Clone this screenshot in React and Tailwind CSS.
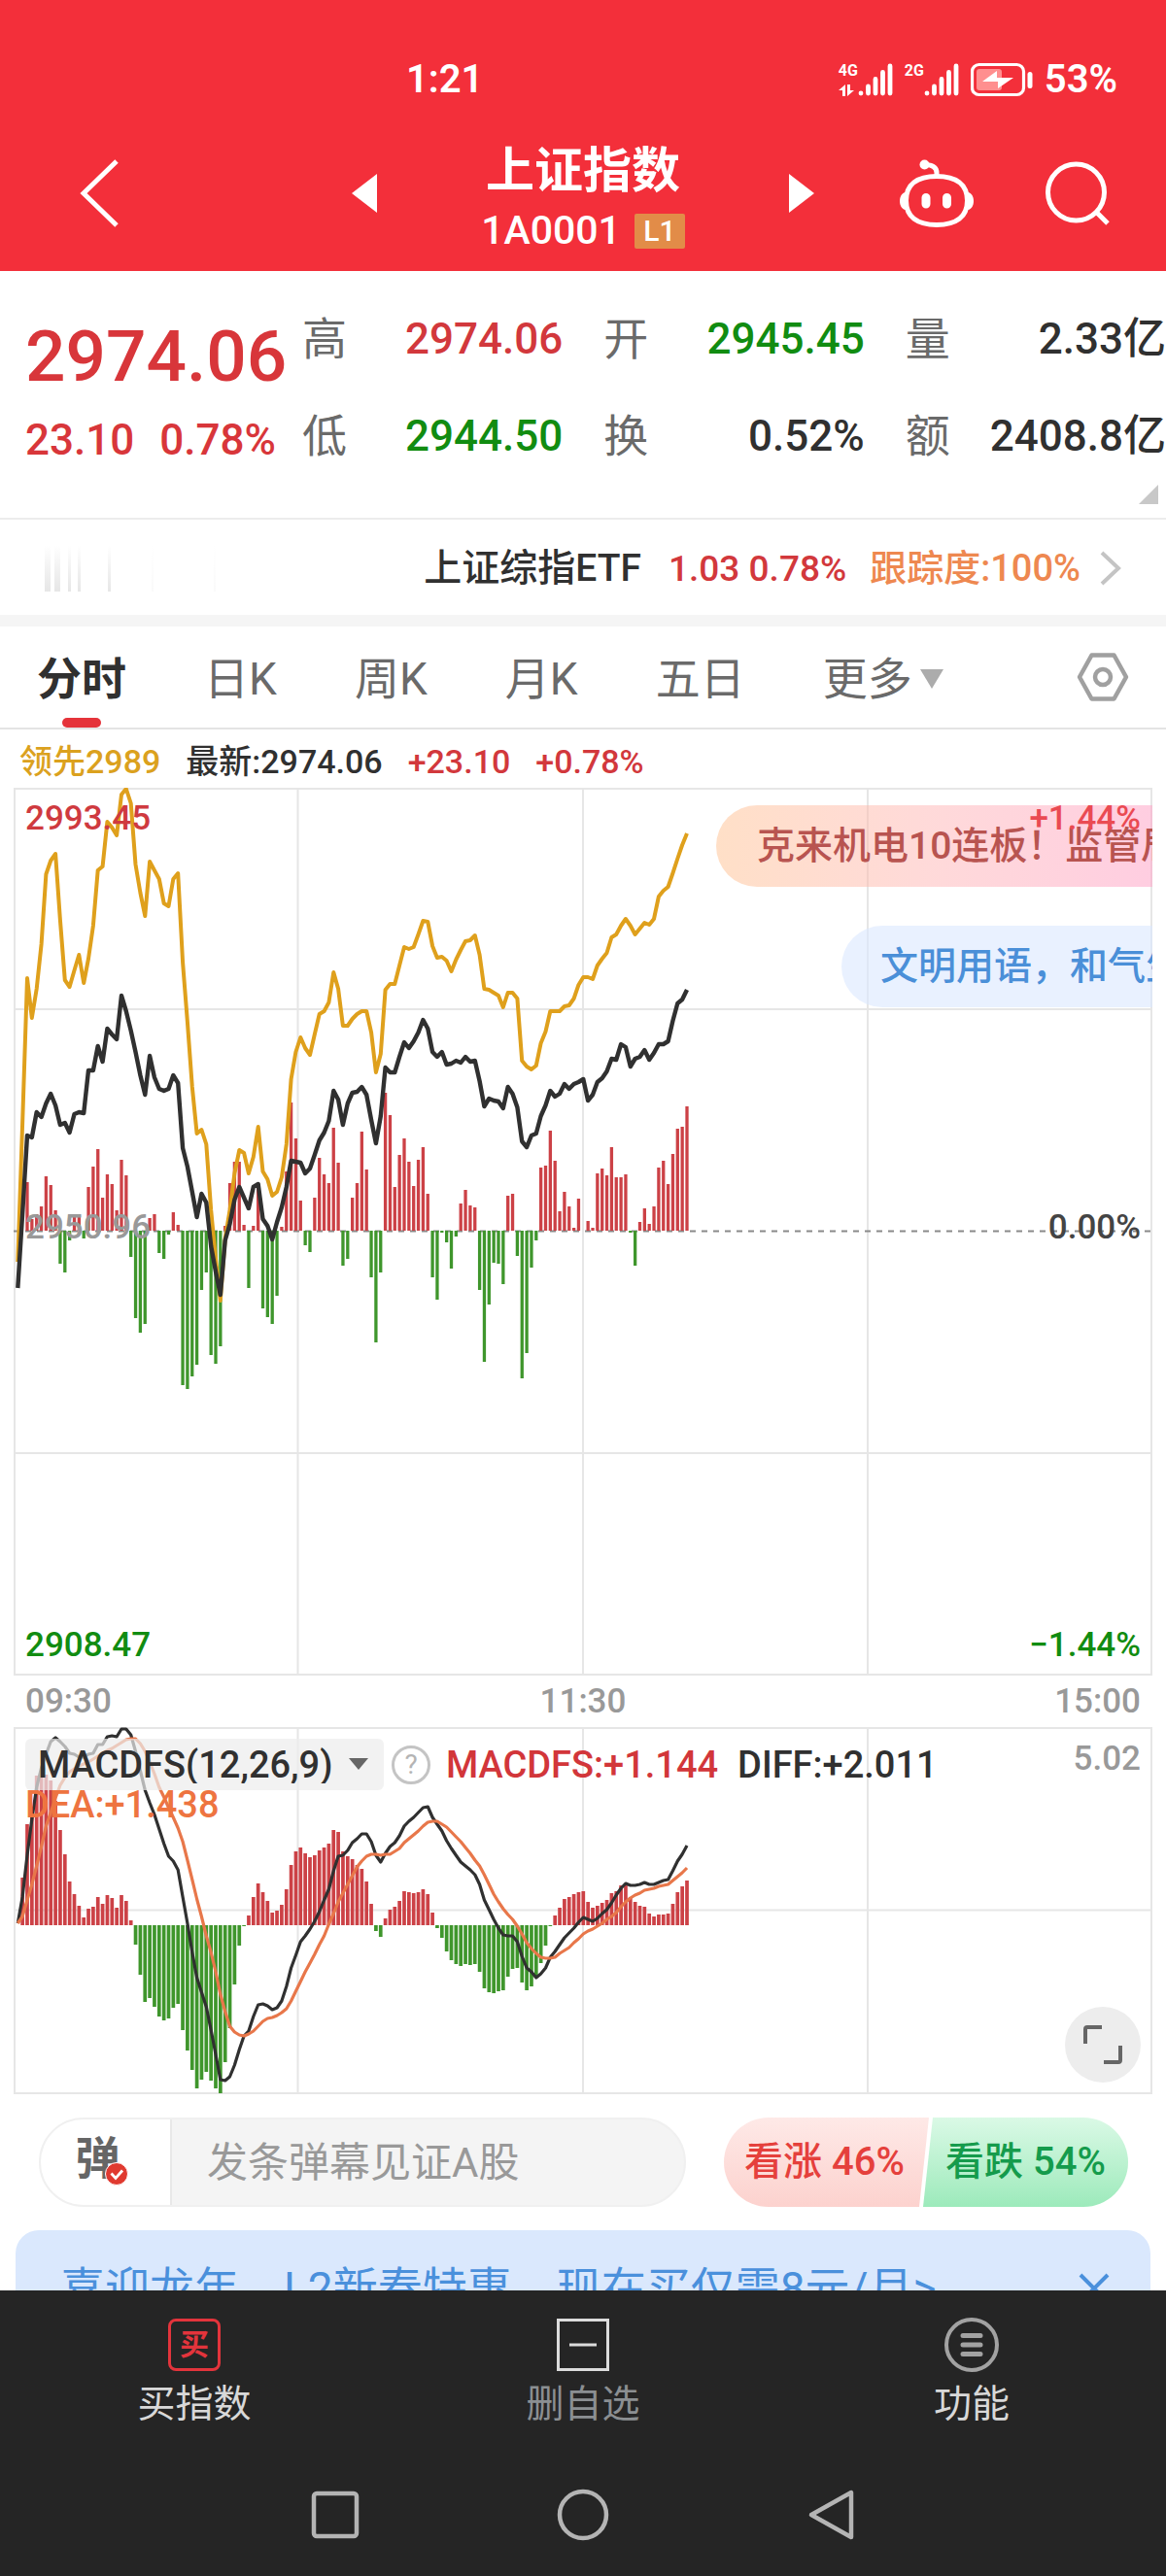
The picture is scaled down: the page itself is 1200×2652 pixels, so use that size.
import React, { useState } from 'react';

// Intraday values, one per minute-slot, measured from the zero line
const volumeDelta = [
  0, 0, 50, 12, 17, 25, 56, 47, 21, -34, -43, -10, 14, 14, -8, 45, 66, 84, 34, 58, 48, 21, 73, 57, -27, -90, -105, -96,
  13, 17, -23, -29, -4, 19, 6, -159, -163, -150, -138, -61, -43, -128, -137, -119, 5, 49, 71, 71, 6, -59, 5, 44, -80,
  -89, -96, -67, 4, 61, 132, 95, 31, -15, -22, 34, 75, 58, 49, 106, 70, -36, -29, 34, 49, 102, 63, -48, -115, -43, 142,
  119, 45, 78, 95, 71, 46, 73, 86, 38, -48, -71, -2, -12, -39, -6, 28, 42, 26, 24, -61, -135, -76, -33, -34, -55, 36,
  38, -26, -152, -126, -38, -10, 65, 67, 103, 72, 20, 40, 25, 3, 33, 0, 10, 3, 59, 64, 57, 86, 55, 55, 58, -2, -36, 9,
  23, 7, 25, 65, 72, 48, 79, 105, 107, 128,
];

const leadLine = [
  -32, 110, 260, 219, 249, 295, 367, 381, 388, 320, 258, 251, 268, 284, 255, 280, 314, 371, 375, 421, 415, 407, 449,
  455, 440, 377, 348, 324, 380, 371, 362, 337, 334, 362, 368, 276, 215, 148, 100, 104, 89, 21, -29, -72, -8, 21, 59, 83,
  80, 59, 76, 107, 61, 53, 36, 40, 55, 89, 156, 184, 199, 188, 181, 202, 223, 226, 235, 266, 249, 211, 211, 218, 223,
  226, 226, 204, 163, 182, 248, 254, 254, 273, 292, 290, 292, 305, 319, 318, 293, 281, 282, 278, 267, 279, 289, 298,
  299, 304, 284, 249, 248, 245, 242, 230, 245, 245, 239, 175, 169, 166, 170, 193, 205, 226, 226, 226, 231, 232, 239,
  253, 261, 261, 259, 273, 280, 286, 302, 305, 314, 321, 314, 305, 311, 317, 315, 321, 344, 350, 354, 368, 383, 397, 409,
];

const priceLine = [
  -59, 17, 98, 96, 122, 117, 131, 141, 129, 109, 111, 101, 120, 122, 121, 165, 165, 190, 174, 208, 202, 197, 242, 226,
  206, 184, 160, 140, 180, 158, 146, 144, 146, 160, 152, 85, 66, 40, 14, 38, 29, -16, -42, -66, -10, 7, 32, 45, 34, 23,
  45, 48, 12, 5, -9, 9, 24, 45, 72, 71, 70, 59, 64, 78, 93, 101, 113, 144, 135, 109, 131, 142, 143, 148, 140, 114, 90,
  118, 168, 163, 163, 179, 194, 188, 195, 204, 217, 208, 184, 179, 184, 171, 172, 175, 173, 179, 174, 175, 154, 128,
  136, 134, 133, 126, 148, 141, 127, 92, 86, 98, 100, 118, 129, 144, 138, 141, 151, 146, 151, 153, 156, 134, 140, 153,
  157, 164, 177, 176, 192, 189, 169, 177, 179, 186, 176, 183, 192, 192, 195, 216, 234, 238, 248,
];

const macdBars = [
  0, 49, 104, 118, 154, 155, 155, 149, 128, 98, 73, 45, 32, 20, 8, 17, 19, 29, 22, 31, 28, 18, 31, 25, 5, -20, -51, -79,
  -75, -84, -94, -98, -96, -85, -81, -108, -129, -149, -168, -159, -151, -160, -168, -173, -141, -106, -61, -21, -1, 10,
  29, 43, 34, 25, 13, 15, 21, 37, 62, 76, 80, 74, 70, 72, 77, 80, 84, 98, 96, 76, 71, 68, 62, 58, 45, 22, -6, -12, 7,
  16, 19, 25, 35, 34, 33, 34, 37, 32, 13, -3, -13, -27, -36, -40, -42, -40, -41, -40, -48, -65, -69, -70, -68, -67, -53,
  -45, -44, -59, -67, -63, -54, -39, -21, -1, 10, 18, 27, 29, 32, 34, 35, 24, 18, 20, 23, 26, 33, 35, 41, 43, 29, 24,
  20, 19, 12, 9, 11, 11, 12, 22, 34, 40, 46,
];

const diffLine = [
  2, 29, 72, 109, 142, 162, 176, 189, 193, 189, 184, 177, 176, 173, 173, 176, 177, 186, 186, 194, 195, 194, 202, 202,
  196, 179, 159, 139, 126, 114, 99, 84, 71, 66, 57, 29, 2, -28, -54, -69, -84, -108, -133, -159, -160, -156, -144, -128,
  -114, -109, -94, -82, -81, -83, -87, -85, -78, -63, -44, -31, -17, -11, -4, 4, 14, 26, 37, 56, 71, 72, 77, 85, 89, 94,
  94, 86, 72, 65, 74, 81, 85, 92, 102, 107, 111, 116, 121, 122, 111, 104, 97, 87, 79, 72, 65, 61, 57, 52, 42, 26, 16, 6,
  -3, -10, -11, -11, -17, -32, -44, -48, -54, -50, -44, -33, -27, -20, -13, -8, -3, 3, 8, 6, 4, 7, 12, 16, 23, 31, 38,
  43, 41, 41, 42, 44, 42, 42, 44, 46, 47, 56, 66, 73, 82,
];

const deaLine = [
  2, 9, 26, 42, 61, 81, 102, 116, 131, 144, 152, 158, 161, 164, 166, 168, 171, 174, 177, 180, 182, 185, 188, 191, 192,
  192, 187, 179, 168, 156, 142, 132, 121, 111, 100, 86, 67, 47, 27, 9, -11, -28, -48, -71, -89, -104, -110, -113, -114,
  -112, -109, -104, -99, -96, -95, -93, -90, -86, -78, -68, -58, -48, -39, -30, -20, -11, 1, 12, 24, 33, 42, 51, 60, 66,
  71, 73, 73, 72, 73, 73, 76, 79, 85, 89, 93, 97, 102, 106, 107, 107, 104, 101, 96, 91, 86, 80, 74, 67, 61, 52, 42, 32,
  24, 17, 11, 6, -1, -9, -18, -24, -29, -33, -34, -34, -33, -29, -26, -23, -18, -14, -9, -6, -4, -1, 2, 6, 9, 13, 19, 24,
  28, 31, 33, 36, 37, 38, 40, 41, 42, 46, 50, 54, 59,
];

const slotX = (i) => 4.3 + i * 4.85;
const toPoints = (values, zero) => values.map((v, i) => `${slotX(i).toFixed(1)},${zero - v}`).join(' ');

const stats = [
  { label: '高', value: '2974.06', color: 'text-[#d2383c]' },
  { label: '开', value: '2945.45', color: 'text-[#118c11]' },
  { label: '量', value: '2.33亿', color: 'text-[#303030]' },
  { label: '低', value: '2944.50', color: 'text-[#118c11]' },
  { label: '换', value: '0.52%', color: 'text-[#303030]' },
  { label: '额', value: '2408.8亿', color: 'text-[#303030]' },
];

const tabs = ['分时', '日K', '周K', '月K', '五日'];

const Bars = ({ values, zero, width }) => (
  <g>
    {values.map((v, i) => (
      <rect
        key={i}
        x={slotX(i) - width / 2}
        y={v > 0 ? zero - v : zero}
        width={width}
        height={Math.abs(v)}
        fill={v > 0 ? '#cc4146' : '#3f962c'}
      />
    ))}
  </g>
);

const Signal = () => (
  <svg className="h-[34px] w-9" viewBox="0 0 36 34" stroke="#fff" strokeWidth="4.8" strokeLinecap="round" aria-hidden="true">
    <path d="M3 31v.1M10.500 24v7M18 16.500v14.500M25.500 9.500v21.500M33 3v28" />
  </svg>
);

const StatusBar = () => (
  <div className="flex h-15 items-center pr-[50px] pl-[418px] text-[40px] leading-none font-semibold">
    <span>1:21</span>
    <div className="ml-auto flex items-center gap-3">
      <div className="flex items-center">
        <div className="flex h-[34px] w-5 flex-col items-start justify-between">
          <span className="text-base leading-4 font-bold">4G</span>
          <svg className="h-3 w-4" viewBox="0 0 16 12" fill="#fff" aria-hidden="true">
            <path d="M0 6l7-6v12H4V6zM9 0h3v6h4l-7 6z" />
          </svg>
        </div>
        <Signal />
      </div>
      <div className="flex items-center">
        <div className="h-[34px] w-5 text-base leading-4 font-bold">2G</div>
        <Signal />
      </div>
      <svg className="h-9 w-16" viewBox="0 0 64 36" fill="none" aria-hidden="true">
        <rect x="1.500" y="2.500" width="53" height="31" rx="7" stroke="#fff" strokeWidth="3.200" />
        <rect x="6" y="7" width="26" height="22" rx="3" fill="#ff8f8f" />
        <path d="M27 9v7h17L28 27v-7H12z" fill="#fff" />
        <rect x="58.500" y="10" width="5" height="17" rx="2.500" fill="#fff" />
      </svg>
      <span>53%</span>
    </div>
  </div>
);

const Header = () => (
  <header className="bg-[#f32f3a] pt-[52px] text-white">
    <StatusBar />
    <div className="grid h-[167px] grid-cols-[1fr_476px_1fr] items-center pt-1.5">
      <button type="button" aria-label="返回" className="ml-[82px] w-10">
        <svg className="h-[70px] w-10" viewBox="0 0 40 70" fill="none" stroke="#fff" strokeWidth="5">
          <path d="M38 2L4 35l34 33" />
        </svg>
      </button>
      <div className="flex items-center justify-between">
        <button type="button" aria-label="上一个">
          <svg className="h-10 w-[26px]" viewBox="0 0 26 40" fill="#fff">
            <path d="M26 0v40L0 20z" />
          </svg>
        </button>
        <div className="flex flex-col items-center gap-4 pt-3 leading-none">
          <h1 className="text-[50px] font-bold">上证指数</h1>
          <p className="flex items-center gap-3.5 text-[41px] font-medium">
            1A0001
            <span className="flex h-9 w-[52px] items-center justify-center rounded-xs bg-[#e28c48] text-[30px]">L1</span>
          </p>
        </div>
        <button type="button" aria-label="下一个">
          <svg className="h-10 w-[26px]" viewBox="0 0 26 40" fill="#fff">
            <path d="M0 0v40l26-20z" />
          </svg>
        </button>
      </div>
      <div className="flex items-center justify-end gap-[74px] pr-[58px]">
        <button type="button" aria-label="智能助手">
          <svg className="h-[70px] w-19" viewBox="0 0 76 70" fill="none" stroke="#fff">
            <path
              d="M38 17.500c20 0 31.500 8 31.500 25S58 67.500 38 67.500 6.500 59.500 6.500 42.500 18 17.500 38 17.500z"
              strokeWidth="5"
            />
            <path d="M38 17v-3c0-5-4-8-11-8.500" strokeWidth="5" />
            <circle cx="25.500" cy="5.500" r="5" fill="#fff" stroke="none" />
            <path d="M6 34c-8 1-8 17 0 18zM70 34c8 1 8 17 0 18z" fill="#fff" stroke="none" />
            <path d="M27 39.500v6.500M48.500 39.500v6.500" strokeWidth="9" strokeLinecap="round" />
          </svg>
        </button>
        <button type="button" aria-label="搜索">
          <svg className="h-[66px] w-[66px]" viewBox="0 0 66 66" fill="none" stroke="#fff" strokeWidth="5">
            <circle cx="31.500" cy="32" r="29" />
            <path d="M52 52l12 12" />
          </svg>
        </button>
      </div>
    </div>
  </header>
);

const Quote = () => (
  <section className="relative flex h-64 border-b-2 border-[#ececec] pt-[42px] pl-[26px]">
    <div className="w-[285px] shrink-0 text-[#d8363a]">
      <p className="pt-2.5 text-[73px] leading-[72px] font-medium">2974.06</p>
      <p className="flex gap-[26px] pt-7 text-[44px] leading-[44px] font-medium">
        <span>23.10</span>
        <span>0.78%</span>
      </p>
    </div>
    <dl className="grid grow auto-rows-[56px] grid-cols-3 gap-x-[42px] gap-y-11">
      {stats.map((s) => (
        <div key={s.label} className="flex items-center justify-between leading-none">
          <dt className="text-[46px] text-[#6a6a6a]">{s.label}</dt>
          <dd className={`text-[44px] font-medium ${s.color}`}>{s.value}</dd>
        </div>
      ))}
    </dl>
    <svg className="absolute right-2 bottom-3.5 h-5 w-5" viewBox="0 0 20 20" fill="#c8c8c8" aria-hidden="true">
      <path d="M20 0v20H0z" />
    </svg>
  </section>
);

const EtfLink = () => (
  <a
    href="#etf"
    className="flex h-[98px] items-center justify-between pt-0.5 pr-[46px] pl-11 text-[38px] leading-none font-medium"
  >
    <svg className="h-12 w-[180px]" viewBox="0 0 180 48" aria-hidden="true">
      <defs>
        <linearGradient id="fade" x1="0" y1="0" x2="0" y2="1">
          <stop offset="0" stopColor="#fff" />
          <stop offset="1" stopColor="#e6e6e6" />
        </linearGradient>
      </defs>
      <path d="M2 0h6v48H2zM12 0h6v48h-6zM26 0h3v48h-3zM36 0h3v48h-3zM67 0h3v48h-3z" fill="url(#fade)" />
      <path d="M112 0h2v48h-2zM176 0h2v48h-2z" fill="url(#fade)" opacity=".2" />
    </svg>
    <div className="flex items-center">
      <span className="text-[39px] text-[#303030]">上证综指ETF</span>
      <span className="ml-7 text-[37px] text-[#d2383c]">1.03 0.78%</span>
      <span className="ml-6 text-[#ee8850]">跟踪度:100%</span>
      <svg className="ml-5 h-9 w-[22px]" viewBox="0 0 22 36" fill="none" stroke="#c4c4c4" strokeWidth="4">
        <path d="M2 2l17 16L2 34" />
      </svg>
    </div>
  </a>
);

const Tabs = () => {
  const [active, setActive] = useState('分时');

  return (
    <nav className="flex h-[106px] items-stretch gap-20 border-b-2 border-[#e4e4e4] pr-[38px] pl-[38px] text-[46px] leading-none text-[#6a6a6a]">
      {tabs.map((tab) => (
        <button
          key={tab}
          type="button"
          onClick={() => setActive(tab)}
          className={`relative pt-1 ${tab === active ? 'font-bold text-[#303030]' : ''}`}
        >
          {tab}
          {tab === active && (
            <span className="absolute bottom-0 left-1/2 h-2.5 w-10 -translate-x-1/2 rounded-full bg-[#e5333a]"></span>
          )}
        </button>
      ))}
      <button type="button" className="flex items-center gap-2 pt-1">
        更多
        <svg className="h-5 w-6" viewBox="0 0 24 20" fill="#acacac" aria-hidden="true">
          <path d="M0 0h24L12 20z" />
        </svg>
      </button>
      <button type="button" aria-label="设置" className="ml-auto">
        <svg className="h-[50px] w-[54px]" viewBox="0 0 54 50" fill="none" stroke="#a0a0a0" strokeWidth="4.500">
          <path d="M15.500 2.500h23L51 25 38.500 47.500h-23L3 25z" strokeLinejoin="round" />
          <circle cx="27" cy="25" r="8" />
        </svg>
      </button>
    </nav>
  );
};

const PriceChart = () => (
  <figure className="relative overflow-hidden text-[35px] leading-none font-medium">
    <svg className="block h-auto w-full" viewBox="0 0 1172 914" fill="none">
      <g stroke="#e6e6e6" strokeWidth="2">
        <rect x="1" y="1" width="1170" height="912" />
        <path d="M292.500 0v914M586 0v914M879 0v914M0 228h1172M0 685h1172" />
      </g>
      <path d="M0 456.500h1172" stroke="#8a8a8a" strokeWidth="2" strokeDasharray="6 6" />
      <Bars values={volumeDelta} zero={456} width={3.3} />
      <polyline points={toPoints(leadLine, 456)} stroke="#dfa01c" strokeWidth="4" strokeLinejoin="round" />
      <polyline points={toPoints(priceLine, 456)} stroke="#303030" strokeWidth="4.400" strokeLinejoin="round" />
    </svg>
    <p className="absolute top-[18px] right-0 flex h-[84px] w-[449px] items-center overflow-hidden rounded-l-full bg-linear-to-r from-[#ffc08f]/50 via-[#ffb4b4]/50 to-[#ffa5c8]/55 pl-[42px] text-[39px] whitespace-nowrap text-[#b85450]">
      克来机电10连板！监管局
    </p>
    <p className="absolute top-[142px] right-0 flex h-[84px] w-80 items-center overflow-hidden rounded-l-full bg-[#dbe8ff]/60 pl-10 text-[39px] whitespace-nowrap text-[#4a8fd8]">
      文明用语，和气生财
    </p>
    <span className="absolute top-3.5 left-3 text-[#cf3a3f]">2993.45</span>
    <span className="absolute top-[435px] left-3 text-[#999]">2950.96</span>
    <span className="absolute bottom-3.5 left-3 text-[#118c11]">2908.47</span>
    <span className="absolute top-3.5 right-3 text-[#ea4a52]">+1.44%</span>
    <span className="absolute top-[435px] right-3 text-[#444]">0.00%</span>
    <span className="absolute right-3 bottom-3.5 text-[#118c11]">−1.44%</span>
  </figure>
);

const MacdChart = () => (
  <figure className="relative text-[38px] leading-none">
    <svg className="block h-auto w-full" viewBox="0 0 1172 378" fill="none">
      <g stroke="#e6e6e6" strokeWidth="2">
        <rect x="1" y="1" width="1170" height="376" />
        <path d="M292.500 0v378M586 0v378M879 0v378M0 188.500h1172" />
      </g>
      <Bars values={macdBars} zero={204} width={3.7} />
      <polyline points={toPoints(diffLine, 204)} stroke="#303030" strokeWidth="3.200" strokeLinejoin="round" />
      <polyline points={toPoints(deaLine, 204)} stroke="#e8774a" strokeWidth="3.200" strokeLinejoin="round" />
    </svg>
    <div className="absolute inset-x-3 top-3 flex h-[53px] items-center font-medium">
      <div className="relative h-full w-[369px]">
        <select
          aria-label="指标"
          className="h-full w-full appearance-none rounded-md bg-[#ededed]/70 pl-[13px] text-[38px] font-medium text-[#303030]"
        >
          <option>MACDFS(12,26,9)</option>
        </select>
        <svg className="pointer-events-none absolute top-5 right-4 h-3 w-5" viewBox="0 0 20 12" fill="#666">
          <path d="M0 0h20L10 12z" />
        </svg>
      </div>
      <button
        type="button"
        aria-label="指标说明"
        className="ml-2 flex size-10 items-center justify-center rounded-full border-3 border-[#c4c4c4] text-[28px] font-normal text-[#b4b4b4]"
      >
        ?
      </button>
      <span className="ml-4 text-[#d2363a]">MACDFS:+1.144</span>
      <span className="ml-5 text-[#303030]">DIFF:+2.011</span>
      <span className="ml-auto pb-3 text-[35px] text-[#999]">5.02</span>
    </div>
    <span className="absolute top-[61px] left-3 font-medium text-[#ee7440]">DEA:+1.438</span>
    <button
      type="button"
      aria-label="全屏"
      className="absolute right-3 bottom-3 flex size-[78px] items-center justify-center rounded-full bg-[#ededed]"
    >
      <svg className="size-10" viewBox="0 0 40 40" fill="none" stroke="#666" strokeWidth="4">
        <path d="M2 19V4a2 2 0 0 1 2-2h15M38 21v15a2 2 0 0 1-2 2H21" />
      </svg>
    </button>
  </figure>
);

const Danmu = () => (
  <div className="mt-6 flex h-[92px] items-stretch gap-[39px] pr-[39px] pl-10 leading-none">
    <div className="flex min-w-0 grow overflow-hidden rounded-full border-2 border-[#f0f0f0] bg-[#f4f4f4]">
      <button type="button" aria-label="弹幕开关" className="relative w-[133px] shrink-0 bg-white pr-4 pb-2 text-[46px] font-bold text-[#666]">
        弹
        <svg className="absolute top-11 left-[66px] h-6 w-6" viewBox="0 0 24 24" fill="none" aria-hidden="true">
          <circle cx="12" cy="12" r="11.500" fill="#e03a30" stroke="#fff" />
          <path d="M6.500 11.500l4.500 5 7-8" stroke="#fff" strokeWidth="2.800" />
        </svg>
      </button>
      <input
        type="text"
        aria-label="发弹幕"
        placeholder="发条弹幕见证A股"
        className="min-w-0 grow border-l-2 border-[#e8e8e8] pl-9 text-[42px] text-[#666] outline-none placeholder:text-[#999]"
      />
    </div>
    <div className="flex shrink-0 overflow-hidden rounded-full text-[40px] font-medium">
      <button
        type="button"
        className="w-[211px] shrink-0 bg-linear-to-b from-[#fee9e7] to-[#fcd2ce] pr-1 text-[#e5403c] [clip-path:polygon(0_0,100%_0,201px_100%,0_100%)]"
      >
        看涨 46%
      </button>
      <button
        type="button"
        className="-ml-1.5 w-[211px] shrink-0 bg-linear-to-b from-[#daf9e6] to-[#9ceabb] text-[#159b4c] [clip-path:polygon(10px_0,100%_0,100%_100%,0_100%)]"
      >
        看跌 54%
      </button>
    </div>
  </div>
);

const Promo = () => (
  <div className="mx-4 mt-6 h-[62px] overflow-hidden rounded-t-3xl bg-[#dae8fd] text-[#4a90dc]">
    <div className="flex h-30 items-center justify-between pr-[42px] pl-[46px]">
      <a href="#promo" className="text-[46px] leading-none whitespace-nowrap">
        喜迎龙年，L2新春特惠，现在买仅需8元/月&gt;
      </a>
      <button type="button" aria-label="关闭">
        <svg className="size-8" viewBox="0 0 32 32" fill="none" stroke="currentColor" strokeWidth="4">
          <path d="M2 2l28 28M30 2L2 30" />
        </svg>
      </button>
    </div>
  </div>
);

const BottomNav = () => (
  <footer className="bg-[#252525] pt-7 pb-9">
    <nav className="grid grid-cols-3 text-[39px] leading-none text-[#d8d8d8]">
      <button type="button" className="flex flex-col items-center gap-3.5">
        <span className="flex h-14 items-center">
          <span className="flex size-[54px] items-center justify-center rounded-lg border-3 border-[#e3343c] text-[30px] font-bold text-[#e3343c]">
            买
          </span>
        </span>
        买指数
      </button>
      <button type="button" className="flex flex-col items-center gap-3.5 text-[#8b8f92]">
        <svg className="size-14" viewBox="0 0 56 56" fill="none" stroke="#dcdcdc" strokeWidth="3">
          <rect x="2.500" y="2.500" width="51" height="51" />
          <path d="M14 28h28" />
        </svg>
        删自选
      </button>
      <button type="button" className="flex flex-col items-center gap-3.5">
        <svg className="size-14" viewBox="0 0 56 56" fill="none" stroke="#a2a2a2" strokeWidth="4">
          <circle cx="28" cy="28" r="26" />
          <path d="M19 18.500h18M19 28h18M19 37.500h18" strokeWidth="5" strokeLinecap="round" />
        </svg>
        功能
      </button>
    </nav>
    <div className="mt-[67px] flex justify-center gap-[201px]">
      <button type="button" aria-label="最近任务">
        <svg className="size-[54px]" viewBox="0 0 54 54" fill="none" stroke="#b4b4b4" strokeWidth="4.500">
          <rect x="5" y="5" width="44" height="44" rx="3" />
        </svg>
      </button>
      <button type="button" aria-label="主屏幕">
        <svg className="size-[54px]" viewBox="0 0 54 54" fill="none" stroke="#b4b4b4" strokeWidth="4.500">
          <circle cx="27" cy="27" r="24" />
        </svg>
      </button>
      <button type="button" aria-label="返回上页">
        <svg className="size-[54px]" viewBox="0 0 54 54" fill="none" stroke="#b4b4b4" strokeWidth="4.500" strokeLinejoin="round">
          <path d="M48 4v46L7 27z" />
        </svg>
      </button>
    </div>
  </footer>
);

export default function App() {
  return (
    <div className="w-full overflow-hidden bg-white font-['Roboto','Noto_Sans_CJK_SC',sans-serif]">
      <Header />
      <main>
        <Quote />
        <EtfLink />
        <div className="h-3 bg-[#f5f5f5]"></div>
        <Tabs />
        <div className="px-3.5">
          <p className="flex h-[60px] items-center gap-[26px] pt-1.5 pl-1.5 text-[34px] leading-none font-medium text-[#d2383c]">
            <span className="text-[#dba11e]">领先2989</span>
            <span className="text-[#303030]">最新:2974.06</span>
            <span>+23.10</span>
            <span>+0.78%</span>
          </p>
          <PriceChart />
          <div className="flex h-[53px] items-center justify-between px-3 text-[35px] leading-none font-medium text-[#999]">
            <span>09:30</span>
            <span>11:30</span>
            <span>15:00</span>
          </div>
          <MacdChart />
        </div>
        <Danmu />
        <Promo />
      </main>
      <BottomNav />
    </div>
  );
}
